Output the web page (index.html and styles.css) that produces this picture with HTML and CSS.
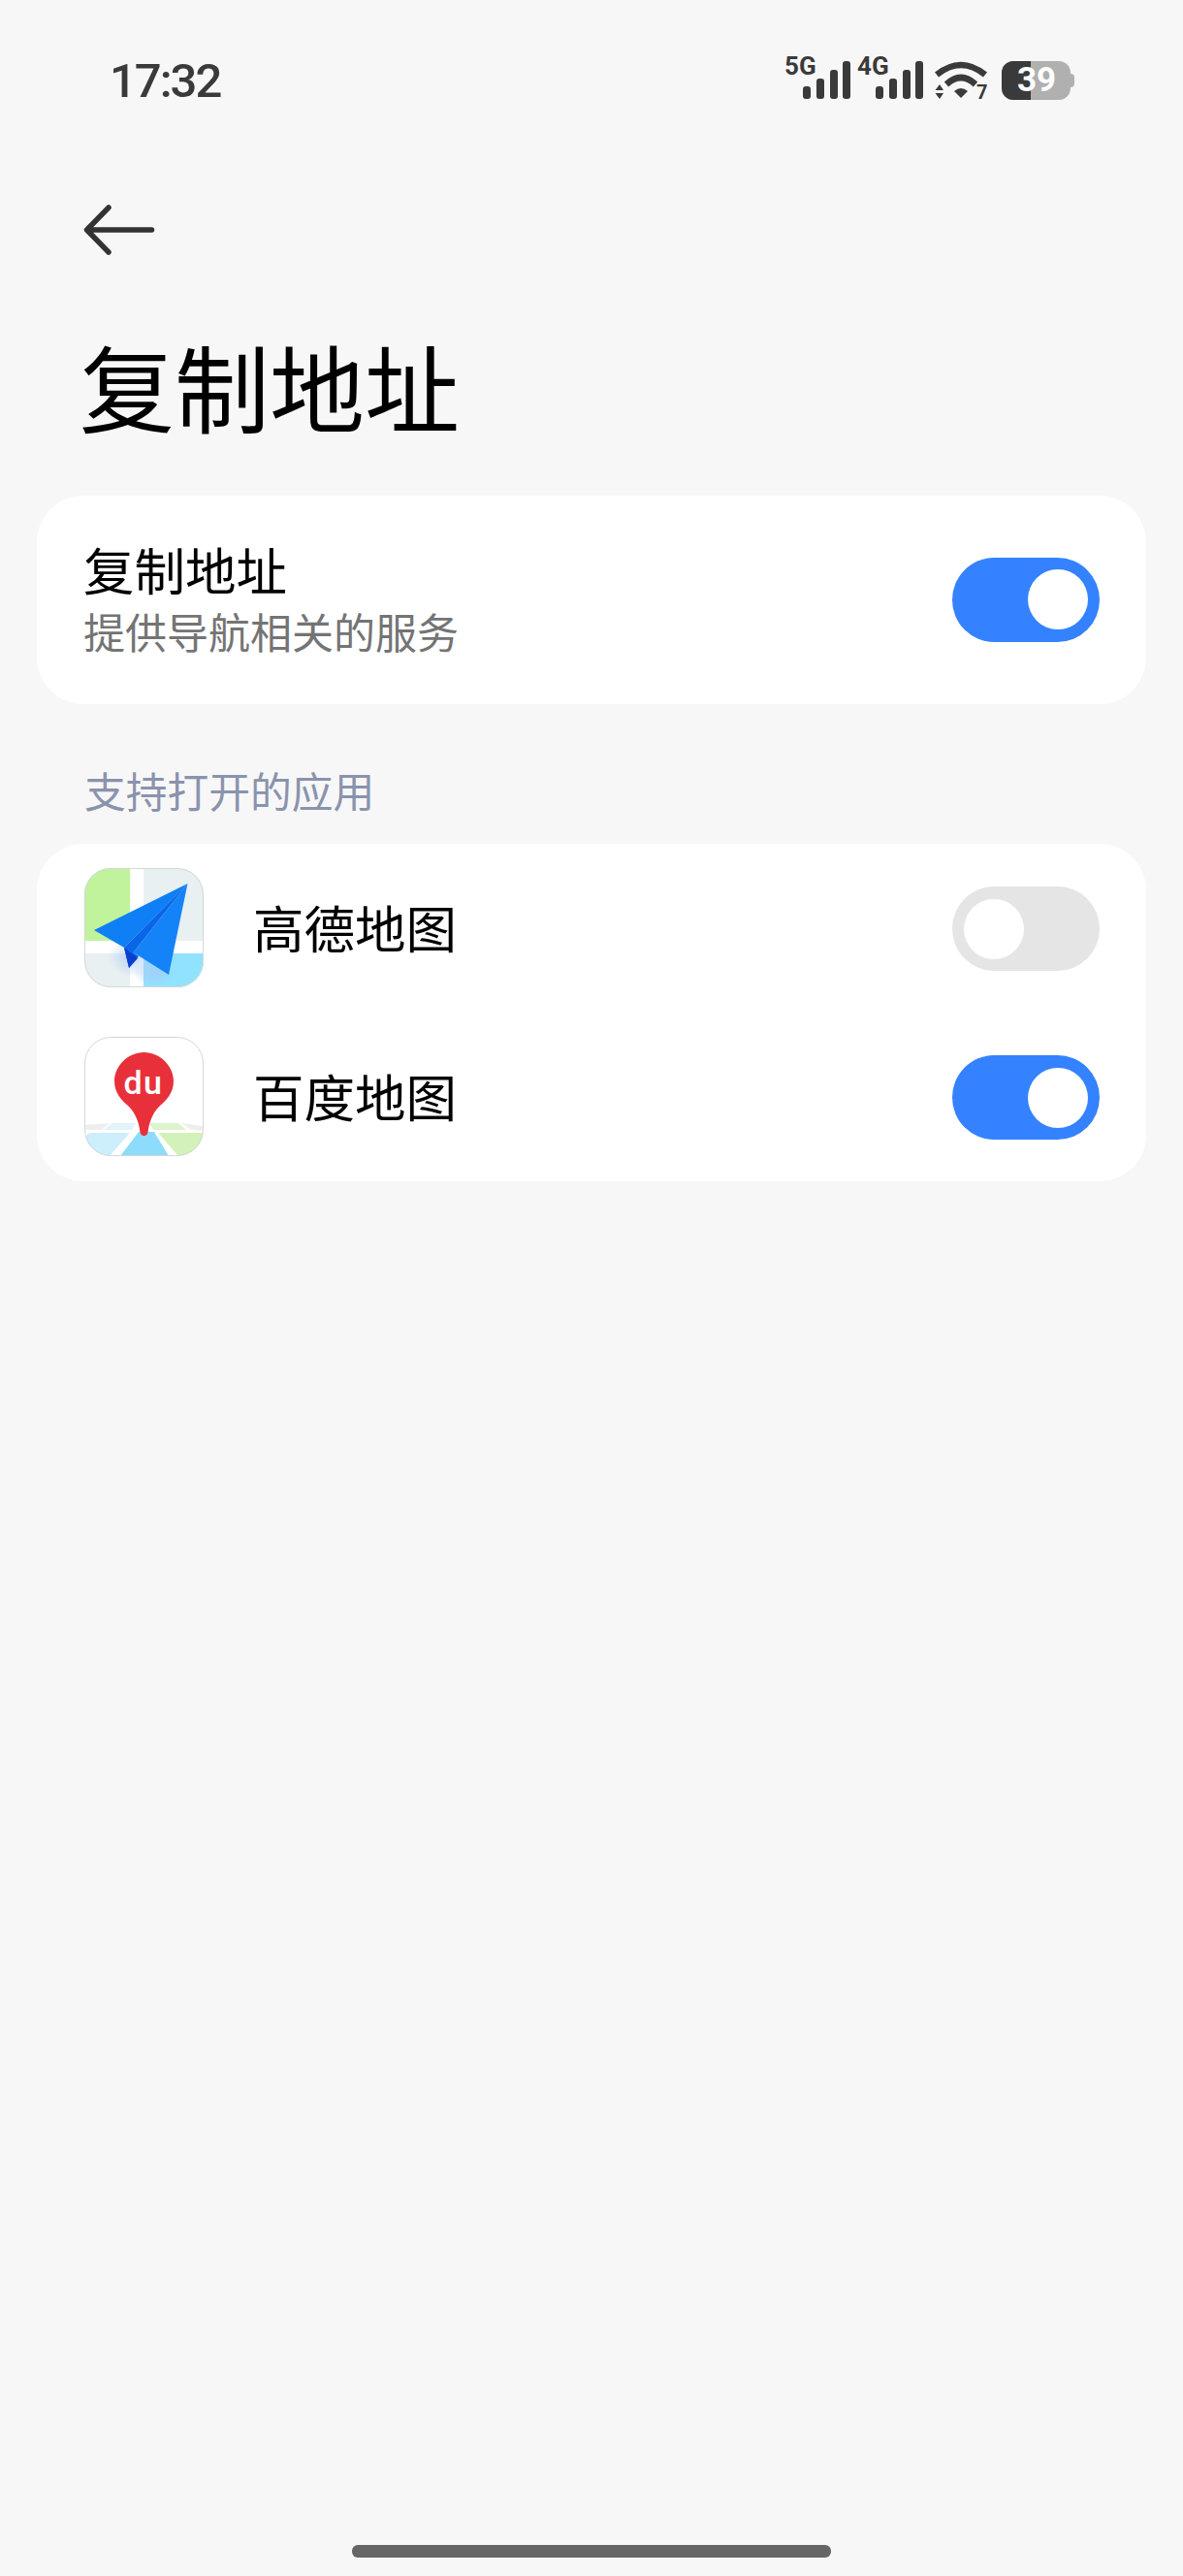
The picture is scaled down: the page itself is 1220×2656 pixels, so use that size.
FILE: index.html
```html
<!DOCTYPE html>
<html lang="zh-CN">
<head>
<meta charset="utf-8">
<title>复制地址</title>
<link rel="stylesheet" href="styles.css">
</head>
<body>
<div class="screen">
  <header class="statusbar">
    <span class="time">17:32</span>
    <div class="status-icons">
      <div class="signal">
        <span class="net">5G</span>
        <svg class="bars" width="50" height="40" viewBox="0 0 50 40"><rect x="0" y="26" width="8" height="13" rx="3"/><rect x="14" y="18" width="8" height="21" rx="3"/><rect x="28" y="9" width="8" height="30" rx="3"/><rect x="41" y="0" width="8" height="39" rx="3"/></svg>
      </div>
      <div class="signal">
        <span class="net">4G</span>
        <svg class="bars" width="50" height="40" viewBox="0 0 50 40"><rect x="0" y="26" width="8" height="13" rx="3"/><rect x="14" y="18" width="8" height="21" rx="3"/><rect x="28" y="9" width="8" height="30" rx="3"/><rect x="41" y="0" width="8" height="39" rx="3"/></svg>
      </div>
      <svg class="wifi" width="56" height="48" viewBox="0 0 56 48">
        <path d="M2 14 Q27 -6 52 14" fill="none" stroke="#3a3a3a" stroke-width="6.500"/>
        <path d="M12 24 Q27 10 42 24" fill="none" stroke="#3a3a3a" stroke-width="6.500"/>
        <path d="M20 31 Q27 25 34 31 L27 38 Z" fill="#3a3a3a"/>
        <path d="M5 24 L9 30 H0.500 Z M0.500 33 H9 L5 39 Z" fill="#3a3a3a"/>
        <text x="43" y="39" class="wifi-seven">7</text>
      </svg>
      <div class="battery">
        <div class="battery-body"><div class="battery-fill"></div><span class="battery-num">39</span></div>
        <div class="battery-cap"></div>
      </div>
    </div>
  </header>

  <button class="back" aria-label="返回">
    <svg width="76" height="56" viewBox="0 0 76 56"><path d="M26 3 L3.500 26 L26 49 M4 26 H70.500" fill="none" stroke="#333" stroke-width="5.500" stroke-linecap="round" stroke-linejoin="round"/></svg>
  </button>

  <h1 class="title">复制地址</h1>

  <section class="card card-main">
    <div class="main-text">
      <div class="row-title">复制地址</div>
      <div class="row-sub">提供导航相关的服务</div>
    </div>
    <div class="toggle on"><span class="knob"></span></div>
  </section>

  <h2 class="section-label">支持打开的应用</h2>

  <section class="card card-apps">
    <div class="app-row">
      <svg class="app-icon" viewBox="0 0 123 123">
        <defs>
          <clipPath id="gclip"><rect width="123" height="123" rx="27"/></clipPath>
          <radialGradient id="gshadow" cx="0.5" cy="0.5" r="0.5"><stop offset="0" stop-color="#a9c8f7" stop-opacity=".75"/><stop offset="1" stop-color="#a9c8f7" stop-opacity="0"/></radialGradient>
        </defs>
        <g clip-path="url(#gclip)">
          <rect width="123" height="123" fill="#e8f0f1"/>
          <rect width="47" height="75" fill="#c0f39c"/>
          <rect y="88" x="61" width="62" height="35" fill="#91e2fe"/>
          <rect x="47" width="14" height="123" fill="#fff"/>
          <rect y="75" width="123" height="13" fill="#fff"/>
          <ellipse cx="50" cy="92" rx="26" ry="20" fill="url(#gshadow)"/>
          <ellipse cx="72" cy="108" rx="22" ry="14" fill="url(#gshadow)"/>
          <path d="M106.500 16 L10 64 L41 82 Z" fill="#0f7ff5"/>
          <path d="M106.500 16 L50.500 87 L87 110 Z" fill="#1583f8"/>
          <path d="M106.500 16 L41 82 L46 103 L56 91 L50.500 87 Z" fill="#0a66e8"/>
          <path d="M41 82 L46 103 L55 93 Z" fill="#0b3fd0"/>
        </g>
        <rect x=".5" y=".5" width="122" height="122" rx="27" fill="none" stroke="#d5d8d8"/>
      </svg>
      <span class="app-name">高德地图</span>
      <div class="toggle off"><span class="knob"></span></div>
    </div>
    <div class="app-row">
      <svg class="app-icon" viewBox="0 0 123 123">
        <defs>
          <clipPath id="bclip"><rect width="123" height="123" rx="27"/></clipPath>
        </defs>
        <g clip-path="url(#bclip)">
          <rect width="123" height="123" fill="#fff"/>
          <path d="M0 91 L26 89 L18 96 H0 Z" fill="#eeeeee"/>
          <path d="M19 96 L29 89 H53 L49 96 Z" fill="#e3f3fa"/>
          <path d="M67 89 H97 L105 96 H71 Z" fill="#dcf3cd"/>
          <path d="M100 89 L123 92 V97 L110 96 Z" fill="#eeeeee"/>
          <path d="M0 106 Q2 99 8 99 H47 L26 123 H0 Z" fill="#cdeefd"/>
          <path d="M56 98 H72 L87 123 H37 Z" fill="#8edcfb"/>
          <path d="M76 99 H123 V116 L118 123 H97 Z" fill="#d3f2b9"/>
        </g>
        <path d="M61.500 16 C78 16 92 30 92 46 C92 58 84 66 78 71 C72 77 68 84 66 95 C65.500 101 64 102 61.500 102 C59 102 57.500 101 57 95 C55 84 51 77 45 71 C39 66 31 58 31 46 C31 30 45 16 61.500 16 Z" fill="#e8303a"/>
        <text x="61" y="59" class="du">du</text>
        <rect x=".5" y=".5" width="122" height="122" rx="27" fill="none" stroke="#d5d8d8"/>
      </svg>
      <span class="app-name">百度地图</span>
      <div class="toggle on"><span class="knob"></span></div>
    </div>
  </section>

  <div class="spacer"></div>
  <div class="home-indicator"></div>
</div>
</body>
</html>
```
FILE: styles.css
```css
* { box-sizing: border-box; }
html, body { margin: 0; padding: 0; }
body {
  background: #f7f7f7;
  font-family: "Noto Sans CJK SC", "Noto Sans", sans-serif;
  color: #000;
}
.screen {
  width: 1220px;
  height: 2656px;
  display: flex;
  flex-direction: column;
  padding: 0 38px;
}
.statusbar {
  height: 84px;
  padding: 57px 74px 0 75px;
  display: flex;
  justify-content: space-between;
  align-items: flex-start;
}
.time {
  font-family: "Roboto", sans-serif;
  font-weight: 500;
  font-size: 49px;
  letter-spacing: -2px;
  line-height: 54px;
  color: #3a3a3a;
}
.status-icons {
  display: flex;
  align-items: flex-start;
  gap: 11px;
  margin-top: 6px;
  height: 44px;
}
.signal {
  display: flex;
  position: relative;
  width: 68px;
  height: 40px;
  justify-content: flex-end;
}
.signal + .signal { margin-left: -4px; }
.net {
  position: absolute;
  left: -1px;
  top: -9px;
  font-family: "Roboto", sans-serif;
  font-weight: 700;
  font-size: 26px;
  line-height: 28px;
  color: #3a3a3a;
}
.bars { fill: #3a3a3a; }
.wifi { flex: none; margin-right: 2px; }
.wifi-seven {
  font-family: "Roboto", sans-serif;
  font-weight: 700;
  font-size: 20px;
  fill: #3a3a3a;
}
.battery { display: flex; align-items: center; height: 40px; }
.battery-body {
  position: relative;
  width: 71px;
  height: 40px;
  border-radius: 12px;
  background: #b0b0b0;
  overflow: hidden;
}
.battery-fill { width: 30px; height: 100%; background: #3a3a3a; }
.battery-num {
  position: absolute;
  left: 16px;
  top: 0;
  font-family: "Roboto", sans-serif;
  font-weight: 700;
  font-size: 35px;
  line-height: 40px;
  color: #fff;
}
.battery-cap {
  width: 4px;
  height: 14px;
  background: #b0b0b0;
  border-radius: 0 4px 4px 0;
}
.back {
  border: 0;
  background: none;
  padding: 0;
  margin: 127px 0 0 48px;
  width: 76px;
  height: 56px;
  display: block;
  align-self: flex-start;
}
.back svg { display: block; }
.title {
  font-weight: 400;
  font-size: 98px;
  line-height: 120px;
  margin: 69px 0 0 44px;
}
.card {
  background: #fff;
  border-radius: 48px;
}
.card-main {
  margin-top: 55px;
  height: 215px;
  padding: 0 48px;
  display: flex;
  align-items: center;
  justify-content: space-between;
}
.card-main .toggle { margin-bottom: 1px; }
.main-text { display: flex; flex-direction: column; margin-top: -4px; }
.row-title { font-size: 52.500px; line-height: 66px; }
.row-sub { font-size: 43px; line-height: 62px; color: #747474; }
.toggle {
  width: 152px;
  height: 87px;
  border-radius: 44px;
  display: flex;
  align-items: center;
  padding: 0 12px;
  flex: none;
}
.toggle.on { background: #3482ff; justify-content: flex-end; }
.toggle.off { background: #e5e5e5; justify-content: flex-start; }
.app-row .toggle { margin-top: 2px; }
.knob {
  width: 62px;
  height: 62px;
  border-radius: 50%;
  background: #fff;
}
.section-label {
  font-weight: 400;
  font-size: 42.750px;
  line-height: 54px;
  color: #8a93ad;
  margin: 61px 0 0 49px;
}
.card-apps {
  margin-top: 29px;
  padding: 25px 48px 26px 49px;
  display: flex;
  flex-direction: column;
  gap: 51px;
}
.app-row { display: flex; align-items: center; height: 123px; }
.app-icon { width: 123px; height: 123px; flex: none; }
.app-name {
  font-size: 52.500px;
  line-height: 66px;
  margin: 0 0 4px 51px;
  flex: 1;
}
.du {
  font-family: "Roboto", sans-serif;
  font-weight: 500;
  font-size: 34px;
  letter-spacing: 1.500px;
  fill: #fff;
  text-anchor: middle;
}
.spacer { flex: 1; }
.home-indicator {
  width: 494px;
  height: 13px;
  border-radius: 6px;
  background: #666666;
  margin: 0 0 19px 325px;
}
```
